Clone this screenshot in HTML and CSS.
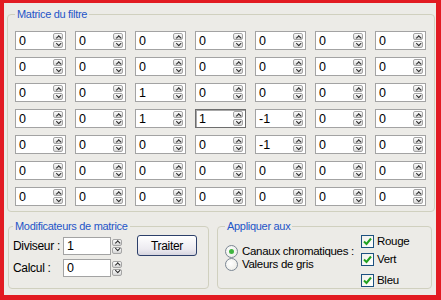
FILE: index.html
```html
<!DOCTYPE html>
<html lang="fr">
<head>
  <meta charset="UTF-8">
  <title>Matrice du filtre</title>
  <link rel="stylesheet" href="styles.css">
</head>
<body>
  <div class="window">
    <fieldset class="group matrix">
      <legend>Matrice du filtre</legend>
      <div class="grid" id="grid"></div>
    </fieldset>
    <div class="bottom">
      <fieldset class="group modifiers">
        <legend>Modificateurs de matrice</legend>
        <div class="mod-body">
          <div class="mod-fields">
            <div class="field">
              <label>Diviseur :</label>
              <div class="updown"><span class="box">1</span><i class="spin"><b class="up"></b><b class="down"></b></i></div>
            </div>
            <div class="field">
              <label>Calcul :</label>
              <div class="updown"><span class="box">0</span><i class="spin"><b class="up"></b><b class="down"></b></i></div>
            </div>
          </div>
          <button class="btn">Traiter</button>
        </div>
      </fieldset>
      <fieldset class="group apply">
        <legend>Appliquer aux</legend>
        <div class="apply-body">
          <div class="radios">
            <div class="opt"><span class="radio on"></span>Canaux chromatiques :</div>
            <div class="opt"><span class="radio"></span>Valeurs de gris</div>
          </div>
          <div class="checks">
            <div class="opt c1"><span class="check"><svg width="11" height="11" viewBox="0 0 11 11"><path d="M2 5.5 L4.5 8 L9 2.5" fill="none" stroke="#21a121" stroke-width="2"/></svg></span>Rouge</div>
            <div class="opt c2"><span class="check"><svg width="11" height="11" viewBox="0 0 11 11"><path d="M2 5.5 L4.5 8 L9 2.5" fill="none" stroke="#21a121" stroke-width="2"/></svg></span>Vert</div>
            <div class="opt c3"><span class="check"><svg width="11" height="11" viewBox="0 0 11 11"><path d="M2 5.5 L4.5 8 L9 2.5" fill="none" stroke="#21a121" stroke-width="2"/></svg></span>Bleu</div>
          </div>
        </div>
      </fieldset>
    </div>
  </div>
  <script>
    // 7x7 filter kernel
    const kernel = [
      [0, 0, 0, 0, 0, 0, 0],
      [0, 0, 0, 0, 0, 0, 0],
      [0, 0, 1, 0, 0, 0, 0],
      [0, 0, 1, 1, -1, 0, 0],
      [0, 0, 0, 0, -1, 0, 0],
      [0, 0, 0, 0, 0, 0, 0],
      [0, 0, 0, 0, 0, 0, 0]
    ];
    const grid = document.getElementById('grid');
    kernel.forEach((row, r) => {
      row.forEach((val, c) => {
        const cell = document.createElement('div');
        cell.className = 'num';
        if (r === 3 && c === 3) cell.classList.add('focus');
        cell.innerHTML = '<span>' + val + '</span><i class="spin"><b class="up"></b><b class="down"></b></i>';
        grid.appendChild(cell);
      });
    });
  </script>
</body>
</html>
```

FILE: styles.css
```css
body {
  margin: 0;
  font-family: "Liberation Sans", Arial, sans-serif;
}
.window {
  width: 441px;
  height: 300px;
  box-sizing: border-box;
  border-style: solid;
  border-color: #e21b22;
  border-width: 3px 5px 5px 4px;
  background: #ecebe7;
  padding: 0 1px 0 3px;
  font-size: 11px;
  letter-spacing: -0.3px;
  color: #000;
}
.group {
  margin: 0;
  border: 1px solid #d0d0bf;
  border-radius: 4px;
  min-width: 0;
}
.group legend {
  padding: 0 2px;
  line-height: 13px;
  color: #1f55c8;
}
.matrix {
  margin-top: 5px;
  padding: 10px 8px 5px 7px;
}
.grid {
  display: grid;
  grid-template-columns: repeat(7, 51px);
  grid-auto-rows: 19px;
  column-gap: 9px;
  row-gap: 7px;
}
.num {
  display: flex;
  align-items: center;
  justify-content: space-between;
  box-sizing: border-box;
  height: 19px;
  border: 1px solid #a3a3a3;
  background: #fff;
  padding: 0 2px 0 3px;
  font-size: 12.5px;
  letter-spacing: 0;
}
.num.focus {
  border-color: #6d6d6d;
  box-shadow: inset 1px 1px 0 #a8a8a8;
}
.spin {
  display: flex;
  flex-direction: column;
  gap: 1px;
}
.spin b {
  position: relative;
  display: block;
  width: 10px;
  height: 7px;
  box-sizing: border-box;
  border: 1px solid #a5a5a5;
  border-radius: 2px;
  background: linear-gradient(#fdfdfd, #d4d4d4);
}
.spin b::after {
  content: '';
  position: absolute;
  left: 2.5px;
  width: 2.5px;
  height: 2.5px;
  border-left: 1.5px solid #2b2b2b;
  border-top: 1.5px solid #2b2b2b;
}
.spin .up::after {
  top: 1.8px;
  transform: rotate(45deg);
}
.spin .down::after {
  top: -0.2px;
  transform: rotate(225deg);
}
.bottom {
  display: flex;
  gap: 8px;
  height: 69px;
  margin-top: 8px;
  margin-left: 1px;
}
.modifiers {
  width: 201px;
  box-sizing: border-box;
  padding: 4px 4px 0 4px;
}
.apply {
  width: 215px;
  box-sizing: border-box;
  padding: 0 4px 0 7px;
}
.mod-body {
  display: flex;
  align-items: flex-start;
}
.mod-fields {
  display: flex;
  flex-direction: column;
  gap: 4px;
}
.field {
  display: flex;
  align-items: center;
}
.field label {
  width: 50px;
  font-size: 12px;
}
.updown {
  display: flex;
  align-items: center;
  gap: 1px;
}
.updown .box {
  box-sizing: border-box;
  width: 48px;
  height: 18px;
  border: 1px solid #a3a3a3;
  background: #fff;
  padding: 1px 0 0 3px;
  font-size: 12.5px;
  letter-spacing: 0;
}
.btn {
  margin: -2px 0 0 15px;
  width: 60px;
  height: 21px;
  border: 1px solid #2c3f6a;
  border-radius: 3px;
  background: linear-gradient(#ffffff, #eceaf0 70%, #d6d5df);
  font-family: inherit;
  font-size: 12px;
  letter-spacing: -0.3px;
  color: #000;
  padding: 0;
}
.apply-body {
  display: flex;
  justify-content: space-between;
}
.radios {
  display: flex;
  flex-direction: column;
  margin-top: 12px;
}
.opt {
  display: flex;
  align-items: center;
  gap: 4px;
  font-size: 11.5px;
  line-height: 13px;
}
.radio {
  width: 13px;
  height: 13px;
  box-sizing: border-box;
  border: 1px solid #7b8794;
  border-radius: 50%;
  background: radial-gradient(circle at 40% 40%, #fff, #e8e8e2);
  display: flex;
  align-items: center;
  justify-content: center;
}
.radio.on::after {
  content: '';
  width: 5px;
  height: 5px;
  border-radius: 50%;
  background: #3fb43f;
}
.checks {
  display: flex;
  flex-direction: column;
  width: 66px;
  margin-top: 2px;
}
.checks .opt {
  gap: 3px;
}
.checks .c2 {
  margin-top: 5px;
}
.checks .c3 {
  margin-top: 8px;
}
.check {
  width: 13px;
  height: 13px;
  box-sizing: border-box;
  border: 1px solid #1c5180;
  background: linear-gradient(135deg, #f0f0ea, #ffffff);
  display: flex;
  align-items: center;
  justify-content: center;
}
```
